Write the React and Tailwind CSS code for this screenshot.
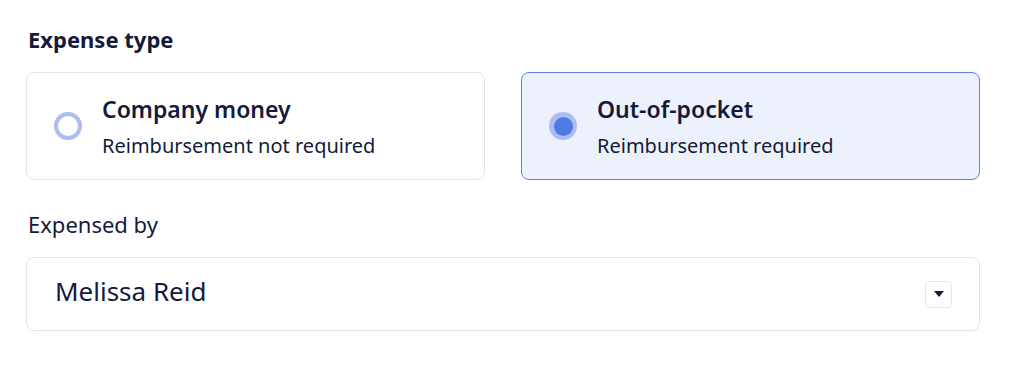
import React from "react";

function Radio({ checked }) {
  if (checked) {
    return (
      <span className="flex h-[28px] w-[28px] shrink-0 items-center justify-center rounded-full bg-[#aebdf0]">
        <span className="h-[19px] w-[19px] rounded-full bg-[#4f7be6]" />
      </span>
    );
  }
  return <span className="h-[28px] w-[28px] shrink-0 rounded-full border-[4px] border-[#aebdf0] bg-white" />;
}

function Option({ checked, title, subtitle }) {
  return (
    <div
      className={
        "flex h-[108px] items-center rounded-[8px] border pl-[27px] " +
        (checked ? "border-[#5b82e6] bg-[#edf1fc]" : "border-[#e3e4e8] bg-white")
      }
    >
      <Radio checked={checked} />
      <div className="ml-[20px] flex flex-col">
        <span className="text-[23px] font-semibold leading-[28px] text-[#141b3a]">{title}</span>
        <span className="mt-[11px] text-[20px] leading-[24px] text-[#141b3a]">{subtitle}</span>
      </div>
    </div>
  );
}

export default function App() {
  return (
    <div className="h-[366px] w-[1016px] bg-white px-[26px] pt-[26px]" style={{ fontFamily: "'Noto Sans', sans-serif" }}>
      <div className="pl-[2px] text-[22px] font-bold leading-[26px] text-[#141b3a]">Expense type</div>
      <div className="mt-[20px] grid w-[954px] grid-cols-2 gap-[36px]">
        <Option title="Company money" subtitle="Reimbursement not required" />
        <Option checked title="Out-of-pocket" subtitle="Reimbursement required" />
      </div>
      <div className="mt-[31px] pl-[2px] text-[22px] leading-[26px] text-[#141b3a]">Expensed by</div>
      <div className="mt-[20px] flex h-[74px] w-[954px] items-center justify-between rounded-[8px] border border-[#e3e4e8] pb-[6px] pl-[28px] pr-[27px]">
        <span className="text-[26px] leading-[30px] text-[#141b3a]">Melissa Reid</span>
        <span className="mt-[6px] flex h-[27px] w-[27px] items-center justify-center rounded-[5px] border border-[#e3e4e8]">
          <svg width="10" height="6" viewBox="0 0 10 6">
            <path d="M0 0H10L5 6Z" fill="#141b3a" />
          </svg>
        </span>
      </div>
    </div>
  );
}
